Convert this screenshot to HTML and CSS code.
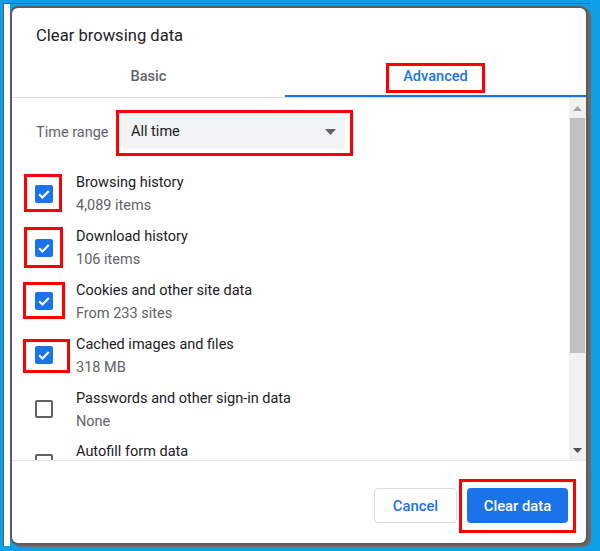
FILE: index.html
```html
<!DOCTYPE html>
<html>
<head>
<meta charset="utf-8">
<link rel="stylesheet" href="styles.css">
</head>
<body>
<div class="stage">
  <div class="backdrop">
    <div class="dialog">
      <div class="title">Clear browsing data</div>
      <div class="tabs">
        <div class="tab tab-basic">Basic</div>
        <div class="tab tab-active"><span class="tab-label">Advanced</span></div>
      </div>
      <div class="body">
        <div class="list">
          <div class="range-row">
            <div class="range-label">Time range</div>
            <div class="range-mark">
              <div class="select">
                <span>All time</span>
                <svg class="caret" width="11" height="6" viewBox="0 0 11 6"><path d="M0 0 H11 L5.5 6 Z" fill="#5f6368"/></svg>
              </div>
            </div>
          </div>

          <div class="item">
            <div class="mark mark-1"><span class="cb cb-on"><svg width="18" height="18" viewBox="0 0 18 18"><path d="M4.2 9.3 L7.4 12.4 L13.8 5.9" fill="none" stroke="#fff" stroke-width="2.1"/></svg></span></div>
            <div class="text"><div class="name">Browsing history</div><div class="sub">4,089 items</div></div>
          </div>
          <div class="item">
            <div class="mark mark-2"><span class="cb cb-on"><svg width="18" height="18" viewBox="0 0 18 18"><path d="M4.2 9.3 L7.4 12.4 L13.8 5.9" fill="none" stroke="#fff" stroke-width="2.1"/></svg></span></div>
            <div class="text"><div class="name">Download history</div><div class="sub">106 items</div></div>
          </div>
          <div class="item">
            <div class="mark mark-3"><span class="cb cb-on"><svg width="18" height="18" viewBox="0 0 18 18"><path d="M4.2 9.3 L7.4 12.4 L13.8 5.9" fill="none" stroke="#fff" stroke-width="2.1"/></svg></span></div>
            <div class="text"><div class="name">Cookies and other site data</div><div class="sub">From 233 sites</div></div>
          </div>
          <div class="item">
            <div class="mark mark-4"><span class="cb cb-on"><svg width="18" height="18" viewBox="0 0 18 18"><path d="M4.2 9.3 L7.4 12.4 L13.8 5.9" fill="none" stroke="#fff" stroke-width="2.1"/></svg></span></div>
            <div class="text"><div class="name">Cached images and files</div><div class="sub">318 MB</div></div>
          </div>
          <div class="item">
            <div class="mark"><span class="cb cb-off"></span></div>
            <div class="text"><div class="name">Passwords and other sign-in data</div><div class="sub">None</div></div>
          </div>
          <div class="item">
            <div class="mark"><span class="cb cb-off"></span></div>
            <div class="text"><div class="name">Autofill form data</div><div class="sub">&nbsp;</div></div>
          </div>
        </div>
        <div class="scrollbar">
          <div class="sb-btn"><svg width="9" height="5" viewBox="0 0 9 5"><path d="M0 5 L4.5 0 L9 5 Z" fill="#a3a3a3"/></svg></div>
          <div class="sb-thumb"></div>
          <div class="sb-track"></div>
          <div class="sb-btn"><svg width="9" height="5" viewBox="0 0 9 5"><path d="M0 0 L9 0 L4.5 5 Z" fill="#505050"/></svg></div>
        </div>
      </div>
      <div class="footer">
        <button class="btn btn-cancel">Cancel</button>
        <div class="btn-mark"><button class="btn btn-primary">Clear data</button></div>
      </div>
    </div>
  </div>
</div>
</body>
</html>
```

FILE: styles.css
```css
* { box-sizing: border-box; }
html, body { margin: 0; padding: 0; }
body {
  width: 600px;
  height: 551px;
  background: #0ca1e6;
  font-family: Roboto, "Liberation Sans", Arial, sans-serif;
  overflow: hidden;
}
.stage {
  height: 551px;
  padding: 3px 10px 5px 3px;
  display: flex;
}
.backdrop {
  flex: 1;
  border-left: 1px solid #5c5c5c;
  border-top: 1px solid #5c5c5c;
  background: linear-gradient(to right, #ffffff 6px, #0ca1e6 6px);
  padding: 4px 0 0 8px;
  display: flex;
  align-items: flex-start;
}
.dialog {
  width: 574px;
  height: 535px;
  background: #fff;
  border-radius: 6px;
  box-shadow: 0 0 0 2px #5c5c5c, 3px 2px 0 2px #6a6a6a;
  display: flex;
  flex-direction: column;
  overflow: hidden;
}
.title {
  padding: 18px 24px 0 24px;
  font-size: 16.6px;
  line-height: 20px;
  color: #202124;
}
.tabs {
  display: flex;
  height: 52px;
  border-bottom: 1px solid #dadce0;
  flex: none;
}
.tab {
  font-size: 14.6px;
  font-weight: 500;
  line-height: 20px;
  text-align: center;
}
.tab-basic {
  width: 273px;
  padding-top: 20px;
  color: #5f6368;
}
.tab-active {
  flex: 1;
  padding-top: 20px;
  color: #1a73e8;
  box-shadow: inset 0 -2px 0 #1a73e8;
}
.tab-label {
  display: inline-block;
  padding: 0 14px 4px 14px;
  outline: 3px solid #ff0000;
  vertical-align: top;
}
.body {
  flex: none;
  height: 363px;
  display: flex;
  border-bottom: 1px solid #e6e6e6;
}
.list {
  flex: 1;
  overflow: hidden;
  padding-top: 15px;
}
.range-row {
  display: flex;
  align-items: center;
  padding-left: 24px;
  height: 40px;
}
.range-label {
  width: 83px;
  font-size: 14.5px;
  color: #5f6368;
  margin-top: -2px;
}
.range-mark {
  padding: 1px 5px 4px 2px;
  outline: 3px solid #ff0000;
}
.select {
  width: 224px;
  height: 35px;
  background: #f1f3f4;
  border-radius: 4px;
  display: flex;
  align-items: center;
  justify-content: space-between;
  padding: 0 10px 0 10px;
  font-size: 14.5px;
  color: #202124;
}
.caret { display: block; margin-right: -1px; }
.item {
  display: flex;
  align-items: center;
  height: 53.8px;
  padding-left: 23px;
}
.range-row + .item { margin-top: 14px; }
.mark {
  display: flex;
  flex: none;
}
.mark-1 { padding: 8px 6px 6px 8px; margin: -8px -6px -6px -8px; outline: 3px solid #ff0000; }
.mark-2 { padding: 9px 7px 8px 8px; margin: -9px -7px -8px -8px; outline: 3px solid #ff0000; }
.mark-3 { padding: 7px 9px 6px 9px; margin: -7px -9px -6px -9px; outline: 3px solid #ff0000; }
.mark-4 { padding: 4px 14px 6px 9px; margin: -4px -14px -6px -9px; outline: 3px solid #ff0000; }
.cb {
  width: 18px;
  height: 18px;
  border-radius: 2px;
  display: block;
}
.cb svg { display: block; }
.cb-on { background: #1a73e8; }
.cb-off { border: 2px solid #5f6368; }
.text {
  margin-left: 23px;
  padding-top: 3px;
}
.name {
  font-size: 14.5px;
  line-height: 20px;
  color: #202124;
}
.sub {
  font-size: 14.5px;
  line-height: 22px;
  margin-top: 2px;
  color: #5f6368;
}
.scrollbar {
  width: 17px;
  flex: none;
  background: #f1f1f1;
  display: flex;
  flex-direction: column;
}
.sb-btn {
  height: 20px;
  display: flex;
  align-items: center;
  justify-content: center;
  flex: none;
}
.sb-thumb {
  height: 235px;
  margin: 0 1px;
  background: #c1c1c1;
  flex: none;
}
.sb-track { flex: 1; }
.footer {
  flex: 1;
  display: flex;
  justify-content: flex-end;
  align-items: flex-start;
  padding: 27px 18px 0 0;
  gap: 10px;
}
.btn {
  height: 35px;
  border-radius: 4px;
  font-family: Roboto, "Liberation Sans", Arial, sans-serif;
  font-size: 14.8px;
  font-weight: 500;
  cursor: pointer;
}
.btn-cancel {
  width: 83px;
  background: #fff;
  color: #1a73e8;
  border: 1px solid #dadce0;
}
.btn-mark {
  display: flex;
  padding: 6px 5px 7px 5px;
  margin: -6px -5px -7px -5px;
  outline: 3px solid #ff0000;
}
.btn-primary {
  width: 101px;
  background: #1a73e8;
  color: #fff;
  border: none;
}
```
